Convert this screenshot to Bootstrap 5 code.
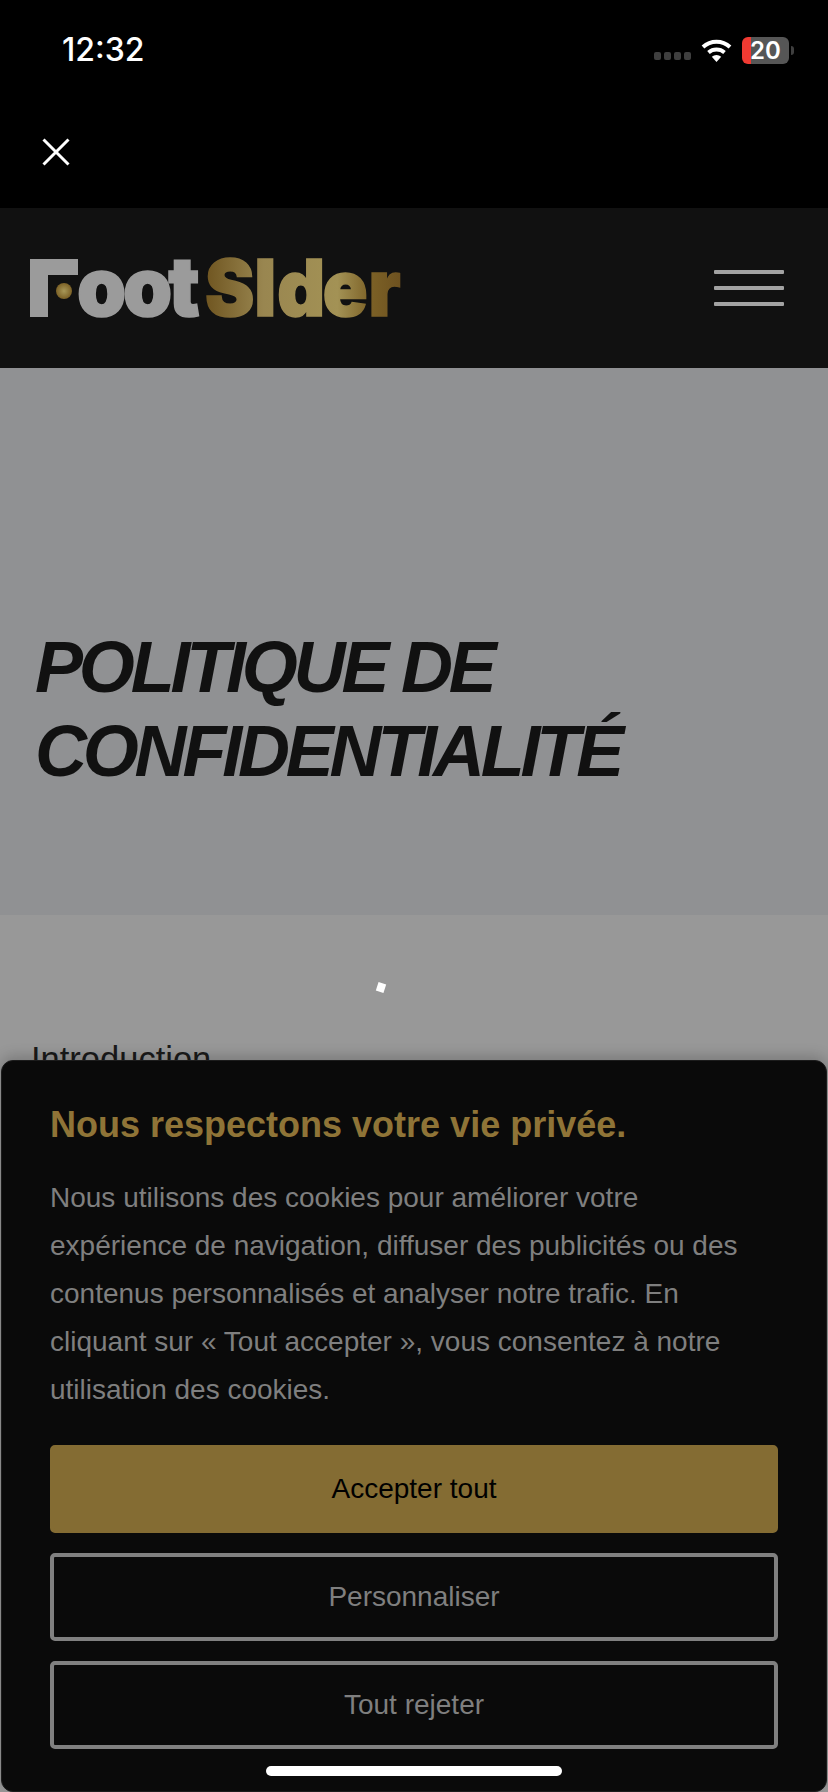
<!DOCTYPE html>
<html lang="fr">
<head>
  <meta charset="UTF-8">
  <title>Politique de confidentialité - FootSider</title>
  <link href="https://cdn.jsdelivr.net/npm/bootstrap@5.3.0/dist/css/bootstrap.min.css" rel="stylesheet">
  <style>
    body {
      width: 828px;
      height: 1792px;
      overflow: hidden;
      position: relative;
      background: #989898;
      font-family: "Liberation Sans", Arial, sans-serif;
    }
    .status-bar {
      height: 208px;
      background: #000;
      padding: 32px 34px 0 62px;
    }
    .status-time {
      font-family: Inter, sans-serif;
      font-weight: 500;
      font-size: 32px;
      line-height: 36px;
      color: #fff;
    }
    .signal-dots {
      gap: 3px;
      margin: 12px 10px 0 0;
    }
    .signal-dot {
      width: 7px;
      height: 8px;
      border-radius: 2px;
      background: #3f3f3f;
    }
    .wifi-icon {
      margin-right: 10px;
    }
    .battery {
      width: 47px;
      height: 27px;
      border-radius: 6px;
      background: linear-gradient(90deg, #f03a32 9px, #565656 9px);
      color: #fff;
      font-family: Inter, sans-serif;
      font-weight: 600;
      font-size: 24px;
      line-height: 27px;
    }
    .battery-nub {
      width: 3px;
      height: 9px;
      margin-left: 2px;
      border-radius: 0 3px 3px 0;
      background: #3f3f3f;
    }
    .close-btn {
      margin: 70px 0 0 -20px;
    }
    .site-header {
      height: 160px;
      background: #111;
      padding: 0 44px 0 28px;
    }
    .site-logo {
      overflow: visible;
    }
    .burger-stack {
      gap: 12px;
    }
    .burger-line {
      width: 70px;
      height: 4px;
      background: #a3a3a3;
      border-radius: 1px;
    }
    .hero {
      height: 547px;
      background: #909193;
      padding: 257px 35px 0;
    }
    .hero-title {
      margin: 0;
      font-size: 72px;
      line-height: 84px;
      font-weight: 700;
      font-style: italic;
      letter-spacing: -4.2px;
      color: #111;
    }
    .page-body {
      padding: 0 31px;
    }
    .loader-dot {
      width: 8px;
      height: 9px;
      margin: 68px 0 0 346px;
      background: #fff;
      transform: rotate(18deg);
    }
    .intro-text {
      margin: 47px 0 0;
      font-size: 34.5px;
      line-height: 40px;
      color: #1a1a1a;
    }
    .cookie-panel {
      position: absolute;
      left: 1px;
      right: 1px;
      top: 1060px;
      bottom: 0;
      background: #0a0a0a;
      border: 1px solid #1c1c1c;
      border-radius: 12px;
      padding: 42px 48px 0;
      box-shadow: 0 -4px 14px rgba(0, 0, 0, .2);
    }
    .cookie-title {
      margin: 0;
      font-size: 36px;
      line-height: 44px;
      font-weight: 700;
      color: #8f7437;
    }
    .cookie-copy {
      max-width: 710px;
      margin: 27px 0 0;
      font-size: 28px;
      line-height: 48px;
      color: #7f7f7f;
    }
    .cookie-btn {
      height: 88px;
      font-size: 28px;
      border-radius: 5px;
      border: 4px solid #808080;
      background: transparent;
      color: #7f7f7f;
      display: flex;
      align-items: center;
      justify-content: center;
    }
    .cookie-btn-accept {
      border-color: #846c33;
      background: #846c33;
      color: #000;
    }
    .cookie-actions {
      margin-top: 31px;
      gap: 20px;
    }
    .home-bar {
      position: absolute;
      left: 266px;
      top: 1766px;
      width: 296px;
      height: 10px;
      border-radius: 5px;
      background: #fff;
    }
  </style>
</head>
<body>
  <div class="status-bar">
    <div class="d-flex justify-content-between align-items-center">
      <span class="status-time">12:32</span>
      <div class="d-flex align-items-center">
        <div class="signal-dots d-flex align-items-center">
          <span class="signal-dot"></span><span class="signal-dot"></span><span class="signal-dot"></span><span class="signal-dot"></span>
        </div>
        <svg class="wifi-icon" width="31" height="24" viewBox="0 0 31 24">
          <path d="M2 9 A20 20 0 0 1 29 9" fill="none" stroke="#fff" stroke-width="4"/>
          <path d="M7.5 14.5 A12.5 12.5 0 0 1 23.5 14.5" fill="none" stroke="#fff" stroke-width="4"/>
          <path d="M10.8 18.8 A7 7 0 0 1 20.2 18.8 L15.5 24 Z" fill="#fff"/>
        </svg>
        <span class="battery text-center">20</span>
        <span class="battery-nub"></span>
      </div>
    </div>
    <div class="close-btn">
      <svg width="28" height="28" viewBox="0 0 28 28">
        <path d="M1.5 1.5 L26.5 26.5 M26.5 1.5 L1.5 26.5" stroke="#fff" stroke-width="3" fill="none"/>
      </svg>
    </div>
  </div>

  <header class="site-header d-flex justify-content-between align-items-center">
    <svg class="site-logo" width="374" height="68" viewBox="0 0 374 68" role="img" aria-label="FootSider">
      <defs>
        <linearGradient id="gold" gradientUnits="userSpaceOnUse" x1="0" y1="0" x2="205" y2="0">
          <stop offset="0" stop-color="#6f5520"/>
          <stop offset=".3" stop-color="#998650"/>
          <stop offset=".68" stop-color="#a39255"/>
          <stop offset=".85" stop-color="#7c6126"/>
          <stop offset="1" stop-color="#6e5220"/>
        </linearGradient>
        <radialGradient id="dot">
          <stop offset="0" stop-color="#a89858"/>
          <stop offset="1" stop-color="#7c6126"/>
        </radialGradient>
      </defs>
      <rect x="2" y="5" width="48" height="16" fill="#9b9b9b"/>
      <rect x="2" y="5" width="18" height="58" fill="#9b9b9b"/>
      <circle cx="36" cy="37" r="8" fill="url(#dot)"/>
      <text transform="translate(49 62) scale(.96 1)" font-family="Inter, sans-serif" font-weight="900" font-size="82" fill="#9b9b9b" stroke="#9b9b9b" stroke-width="1.6" x="0 48 95">oot</text>
      <text transform="translate(177 62) scale(.95 1)" font-family="Inter, sans-serif" font-weight="900" font-size="78" fill="url(#gold)" stroke="url(#gold)" stroke-width="1.6" x="0 52 76 124 172">SIder</text>
    </svg>
    <div class="burger-stack d-flex flex-column">
      <span class="burger-line"></span><span class="burger-line"></span><span class="burger-line"></span>
    </div>
  </header>

  <section class="hero">
    <h1 class="hero-title">POLITIQUE DE<br>CONFIDENTIALITÉ</h1>
  </section>

  <main class="page-body">
    <div class="loader-dot"></div>
    <p class="intro-text">Introduction</p>
  </main>

  <aside class="cookie-panel">
    <h2 class="cookie-title">Nous respectons votre vie privée.</h2>
    <p class="cookie-copy">Nous utilisons des cookies pour améliorer votre expérience de navigation, diffuser des publicités ou des contenus personnalisés et analyser notre trafic. En cliquant sur « Tout accepter », vous consentez à notre utilisation des cookies.</p>
    <div class="cookie-actions d-flex flex-column">
      <button type="button" class="btn cookie-btn cookie-btn-accept">Accepter tout</button>
      <button type="button" class="btn cookie-btn">Personnaliser</button>
      <button type="button" class="btn cookie-btn">Tout rejeter</button>
    </div>
  </aside>
  <div class="home-bar"></div>

  <script src="https://cdn.jsdelivr.net/npm/bootstrap@5.3.0/dist/js/bootstrap.bundle.min.js"></script>
</body>
</html>
